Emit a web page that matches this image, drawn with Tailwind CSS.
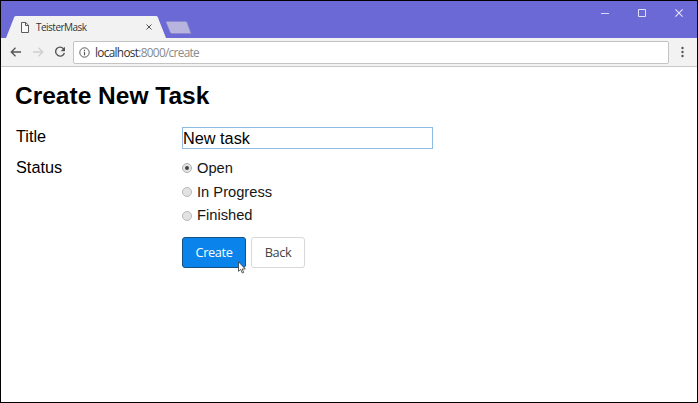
<!DOCTYPE html>
<html lang="en">
<head>
<meta charset="utf-8">
<title>TeisterMask</title>
<script src="https://cdn.jsdelivr.net/npm/@tailwindcss/browser@4"></script>
</head>
<body class="h-[403px] w-[698px] overflow-hidden">
<div class="flex h-[403px] w-[698px] flex-col border border-black bg-white">
  <header class="flex h-[37px] shrink-0 items-end justify-between bg-[#6b69d6]">
    <div class="flex items-end">
      <div class="relative h-[22px] w-[166px]">
        <svg class="absolute inset-0" width="166" height="22" viewBox="0 0 166 22"><path d="M5 22 13.2 1.2Q13.7 0 15 0H155Q156.300 0 156.800 1.200L165 22Z" fill="#f2f2f2"/></svg>
        <div class="relative flex h-[22px] items-center pl-[20px]">
          <svg width="8" height="11" viewBox="0 0 8 11" fill="#fafafa" stroke="#5c5c5c"><path d="M.5.500H4.800L7.500 3.200V10.500H.5ZM4.500.500V3.500H7.500"/></svg>
          <span class="ml-[7px] w-[110px] font-['Open_Sans','Noto_Sans',sans-serif] text-[10px] leading-[14px] tracking-[-0.520px] text-[#333]">TeisterMask</span>
          <svg width="6" height="6" viewBox="0 0 6 6" fill="none" stroke="#505050"><path d="M.5.500 5.500 5.500M5.500.500.500 5.500"/></svg>
        </div>
      </div>
      <svg class="mb-[4px] -ml-[2px]" width="27" height="13" viewBox="0 0 27 13"><path d="M2 .5H20.500Q21.500.500 22 1.500L26 12.500H7Q5.800 12.500 5.300 11.500L1.200 1.500Q.900.500 2 .5Z" fill="#b7b4dd" stroke="#8b88c9" stroke-width=".6"/></svg>
    </div>
    <div class="flex items-center gap-[29px] self-start pt-[8px] pr-[14px]">
      <svg width="8" height="8" viewBox="0 0 8 8" stroke="#d9d8f7"><path d="M0 4.500H8"/></svg>
      <svg width="8" height="8" viewBox="0 0 8 8" fill="none" stroke="#e2e1fa"><path d="M.5.500H7.500V7.500H.5Z"/></svg>
      <svg width="8" height="8" viewBox="0 0 8 8" stroke="#e8e7fb" stroke-width="1.100"><path d="M.4.400 7.600 7.600M7.600.400.400 7.600"/></svg>
    </div>
  </header>
  <nav class="flex h-[29px] shrink-0 items-center border-b border-[#c9c9c9] bg-[#f2f2f2] pl-[9px]">
    <svg width="12" height="10" viewBox="0 0 12 10" fill="none" stroke="#555" stroke-width="1.300"><path d="M11 5H1.500M5.500.800 1.300 5 5.500 9.200"/></svg>
    <svg class="ml-[11px]" width="11" height="10" viewBox="0 0 11 10" fill="none" stroke="#cfcfcf" stroke-width="1.300"><path d="M0 5H9.500M5.500.800 9.700 5 5.500 9.200"/></svg>
    <svg class="ml-[10px]" width="12" height="12" viewBox="0 0 12 12" fill="none"><path d="M9.800 3A4.500 4.500 0 1 0 10.400 7" stroke="#555" stroke-width="1.400"/><path d="M11 .800V5.200H6.600Z" fill="#555"/></svg>
    <div class="ml-[7px] flex h-[23px] w-[596px] items-center rounded-[2px] border border-[#c4c4c4] bg-white pl-[5px]">
      <svg width="11" height="11" viewBox="0 0 11 11" fill="none" stroke="#5a5a5a"><circle cx="5.500" cy="5.500" r="4.700"/><path d="M5.500 4.800V8.200M5.500 2.700V3.900" stroke-width="1.200"/></svg>
      <span class="ml-[5px] font-['Open_Sans','Noto_Sans',sans-serif] text-[11.800px] leading-[16px] tracking-[-0.680px] text-[#333]">localhost<span class="text-[#8a8a8a]">:8000/create</span></span>
    </div>
    <svg class="ml-[12px]" width="3" height="12" viewBox="0 0 3 12" fill="#555"><circle cx="1.500" cy="2" r="1.200"/><circle cx="1.500" cy="6" r="1.200"/><circle cx="1.500" cy="10" r="1.200"/></svg>
  </nav>
  <main class="px-[14px] pt-[15px] font-['Liberation_Sans',Arial,sans-serif] text-black">
    <h1 class="text-[24.500px] leading-[28px] font-bold">Create New Task</h1>
    <form class="mt-[17px]">
      <div class="flex">
        <label for="title" class="w-[167px] pl-px text-[16.300px] leading-[19px]">Title</label>
        <input id="title" type="text" value="New task" class="h-[22px] w-[251px] border border-[#8fbbe2] p-0 text-[16.300px] leading-[20px] outline-none">
      </div>
      <div class="mt-[7px] flex">
        <span class="w-[167px] pt-[2px] pl-px text-[16.300px] leading-[19px]">Status</span>
        <div class="text-[14.700px] text-[#161616]">
          <label class="flex h-[24px] items-center gap-[5px]"><span class="flex size-[10px] items-center justify-center rounded-full border border-[#b0b0b0] bg-[#e4e4e4]"><span class="size-[4px] rounded-full bg-[#444]"></span></span>Open</label>
          <label class="flex h-[24px] items-center gap-[5px]"><span class="size-[10px] rounded-full border border-[#b8b8b8] bg-[#e2e2e2]"></span>In Progress</label>
          <label class="flex h-[23px] items-center gap-[5px]"><span class="size-[10px] rounded-full border border-[#b8b8b8] bg-[#e2e2e2]"></span>Finished</label>
        </div>
      </div>
      <div class="mt-[10px] ml-[167px] flex gap-[5px] font-['Open_Sans','Noto_Sans',sans-serif] text-[12.800px] tracking-[-0.400px]">
        <button type="button" class="relative h-[31px] w-[64px] rounded-[3px] border border-[#17517f] bg-[#0a84ea] text-white">Create
          <svg class="absolute top-[23px] left-[55px]" width="8" height="13" viewBox="0 0 8 13"><path d="M.5.800V10.300L2.700 8.400 4.300 12 5.700 11.400 4.200 8H7.300Z" fill="#fff" stroke="#333" stroke-width=".8"/></svg>
        </button>
        <button type="button" class="h-[31px] w-[54px] rounded-[3px] border border-[#d8d8d8] bg-white text-[#444]">Back</button>
      </div>
    </form>
  </main>
</div>
</body>
</html>
